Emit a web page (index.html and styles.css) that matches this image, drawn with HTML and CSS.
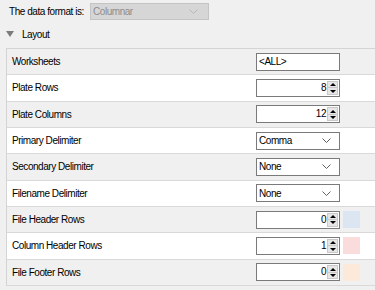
FILE: index.html
```html
<!DOCTYPE html>
<html>
<head>
<meta charset="utf-8">
<link rel="stylesheet" href="styles.css">
</head>
<body>
<div class="top">
  <span class="top-label">The data format is:</span>
  <div class="combo disabled">
    <span>Columnar</span>
    <svg class="chev" width="9" height="5" viewBox="0 0 9 5"><path d="M0.5 0.5 L4.5 4.5 L8.5 0.5" fill="none" stroke="#b8b8b8" stroke-width="1"/></svg>
  </div>
</div>
<div class="section">
  <span class="tri"></span>
  <span class="section-title">Layout</span>
</div>
<div class="grid">
  <div class="row alt">
    <span class="label">Worksheets</span>
    <div class="text">&lt;ALL&gt;</div>
  </div>
  <div class="row">
    <span class="label">Plate Rows</span>
    <div class="num"><span class="val">8</span><div class="spin"><span class="up"></span><span class="down"></span></div></div>
  </div>
  <div class="row alt">
    <span class="label">Plate Columns</span>
    <div class="num"><span class="val">12</span><div class="spin"><span class="up"></span><span class="down"></span></div></div>
  </div>
  <div class="row">
    <span class="label">Primary Delimiter</span>
    <div class="combo"><span>Comma</span><svg class="chev" width="9" height="5" viewBox="0 0 9 5"><path d="M0.5 0.5 L4.5 4.5 L8.5 0.5" fill="none" stroke="#606060" stroke-width="1"/></svg></div>
  </div>
  <div class="row alt">
    <span class="label">Secondary Delimiter</span>
    <div class="combo"><span>None</span><svg class="chev" width="9" height="5" viewBox="0 0 9 5"><path d="M0.5 0.5 L4.5 4.5 L8.5 0.5" fill="none" stroke="#606060" stroke-width="1"/></svg></div>
  </div>
  <div class="row">
    <span class="label">Filename Delimiter</span>
    <div class="combo"><span>None</span><svg class="chev" width="9" height="5" viewBox="0 0 9 5"><path d="M0.5 0.5 L4.5 4.5 L8.5 0.5" fill="none" stroke="#606060" stroke-width="1"/></svg></div>
  </div>
  <div class="row alt">
    <span class="label">File Header Rows</span>
    <div class="num"><span class="val">0</span><div class="spin"><span class="up"></span><span class="down"></span></div></div>
    <span class="swatch blue"></span>
  </div>
  <div class="row">
    <span class="label">Column Header Rows</span>
    <div class="num"><span class="val">1</span><div class="spin"><span class="up"></span><span class="down"></span></div></div>
    <span class="swatch pink"></span>
  </div>
  <div class="row alt">
    <span class="label">File Footer Rows</span>
    <div class="num"><span class="val">0</span><div class="spin"><span class="up"></span><span class="down"></span></div></div>
    <span class="swatch peach"></span>
  </div>
</div>
</body>
</html>
```
FILE: styles.css
```css
* { box-sizing: border-box; }
html, body { margin: 0; padding: 0; }
body {
  width: 375px;
  height: 290px;
  overflow: hidden;
  background: #f0f0f0;
  font-family: "Liberation Sans", Arial, sans-serif;
  font-size: 10px;
  letter-spacing: -0.45px;
  color: #000;
  white-space: nowrap;
}
.top {
  display: flex;
  align-items: center;
  padding: 3px 0 0 9px;
  height: 20px;
}
.top-label { width: 81px; }
.combo {
  width: 84px;
  height: 18px;
  border: 1px solid #7a7a7a;
  background: #fff;
  display: flex;
  align-items: center;
  justify-content: space-between;
  padding: 0 8px 0 2px;
}
.combo.disabled {
  width: 119px;
  height: 17px;
  background: #d6d6d6;
  border-color: #c4c4c4;
  color: #8d8d8d;
  padding-right: 10px;
}
.chev { display: block; }
.section {
  display: flex;
  align-items: center;
  height: 28px;
  padding-left: 6px;
}
.tri {
  width: 0;
  height: 0;
  border-left: 4px solid transparent;
  border-right: 4px solid transparent;
  border-top: 6px solid #7b7b7b;
  margin-right: 8px;
}
.section-title { color: #000; }
.grid {
  margin-left: 6px;
  border-left: 1px solid #d4d4d4;
  border-top: 1px solid #d4d4d4;
}
.row {
  display: flex;
  align-items: center;
  height: 26.33px;
  border-bottom: 1px solid #d9d9d9;
  background: #fff;
}
.row.alt { background: #f0f0f0; }
.label {
  width: 249px;
  padding-left: 5px;
}
.text {
  width: 84px;
  height: 18px;
  border: 1px solid #7a7a7a;
  background: #fff;
  display: flex;
  align-items: center;
  padding-left: 2px;
}
.num {
  width: 84px;
  height: 18px;
  border: 1px solid #7a7a7a;
  background: #fff;
  display: flex;
  align-items: stretch;
  padding: 1px;
}
.val {
  flex: 1;
  text-align: right;
  padding-right: 1px;
  line-height: 14px;
}
.spin {
  width: 11px;
  display: flex;
  flex-direction: column;
  background: #e6e6e6;
  border: 1px solid #c8c8c8;
}
.up, .down {
  flex: 1;
  display: flex;
  align-items: center;
  justify-content: center;
}
.up::before {
  content: "";
  border-left: 3px solid transparent;
  border-right: 3px solid transparent;
  border-bottom: 3px solid #000;
}
.down::before {
  content: "";
  border-left: 3px solid transparent;
  border-right: 3px solid transparent;
  border-top: 3px solid #000;
}
.down { border-top: 1px solid #c8c8c8; }
.swatch {
  width: 17px;
  height: 17px;
  margin-left: 3px;
}
.blue { background: #dce6f2; }
.pink { background: #fbdcdc; }
.peach { background: #fde9da; }
```
